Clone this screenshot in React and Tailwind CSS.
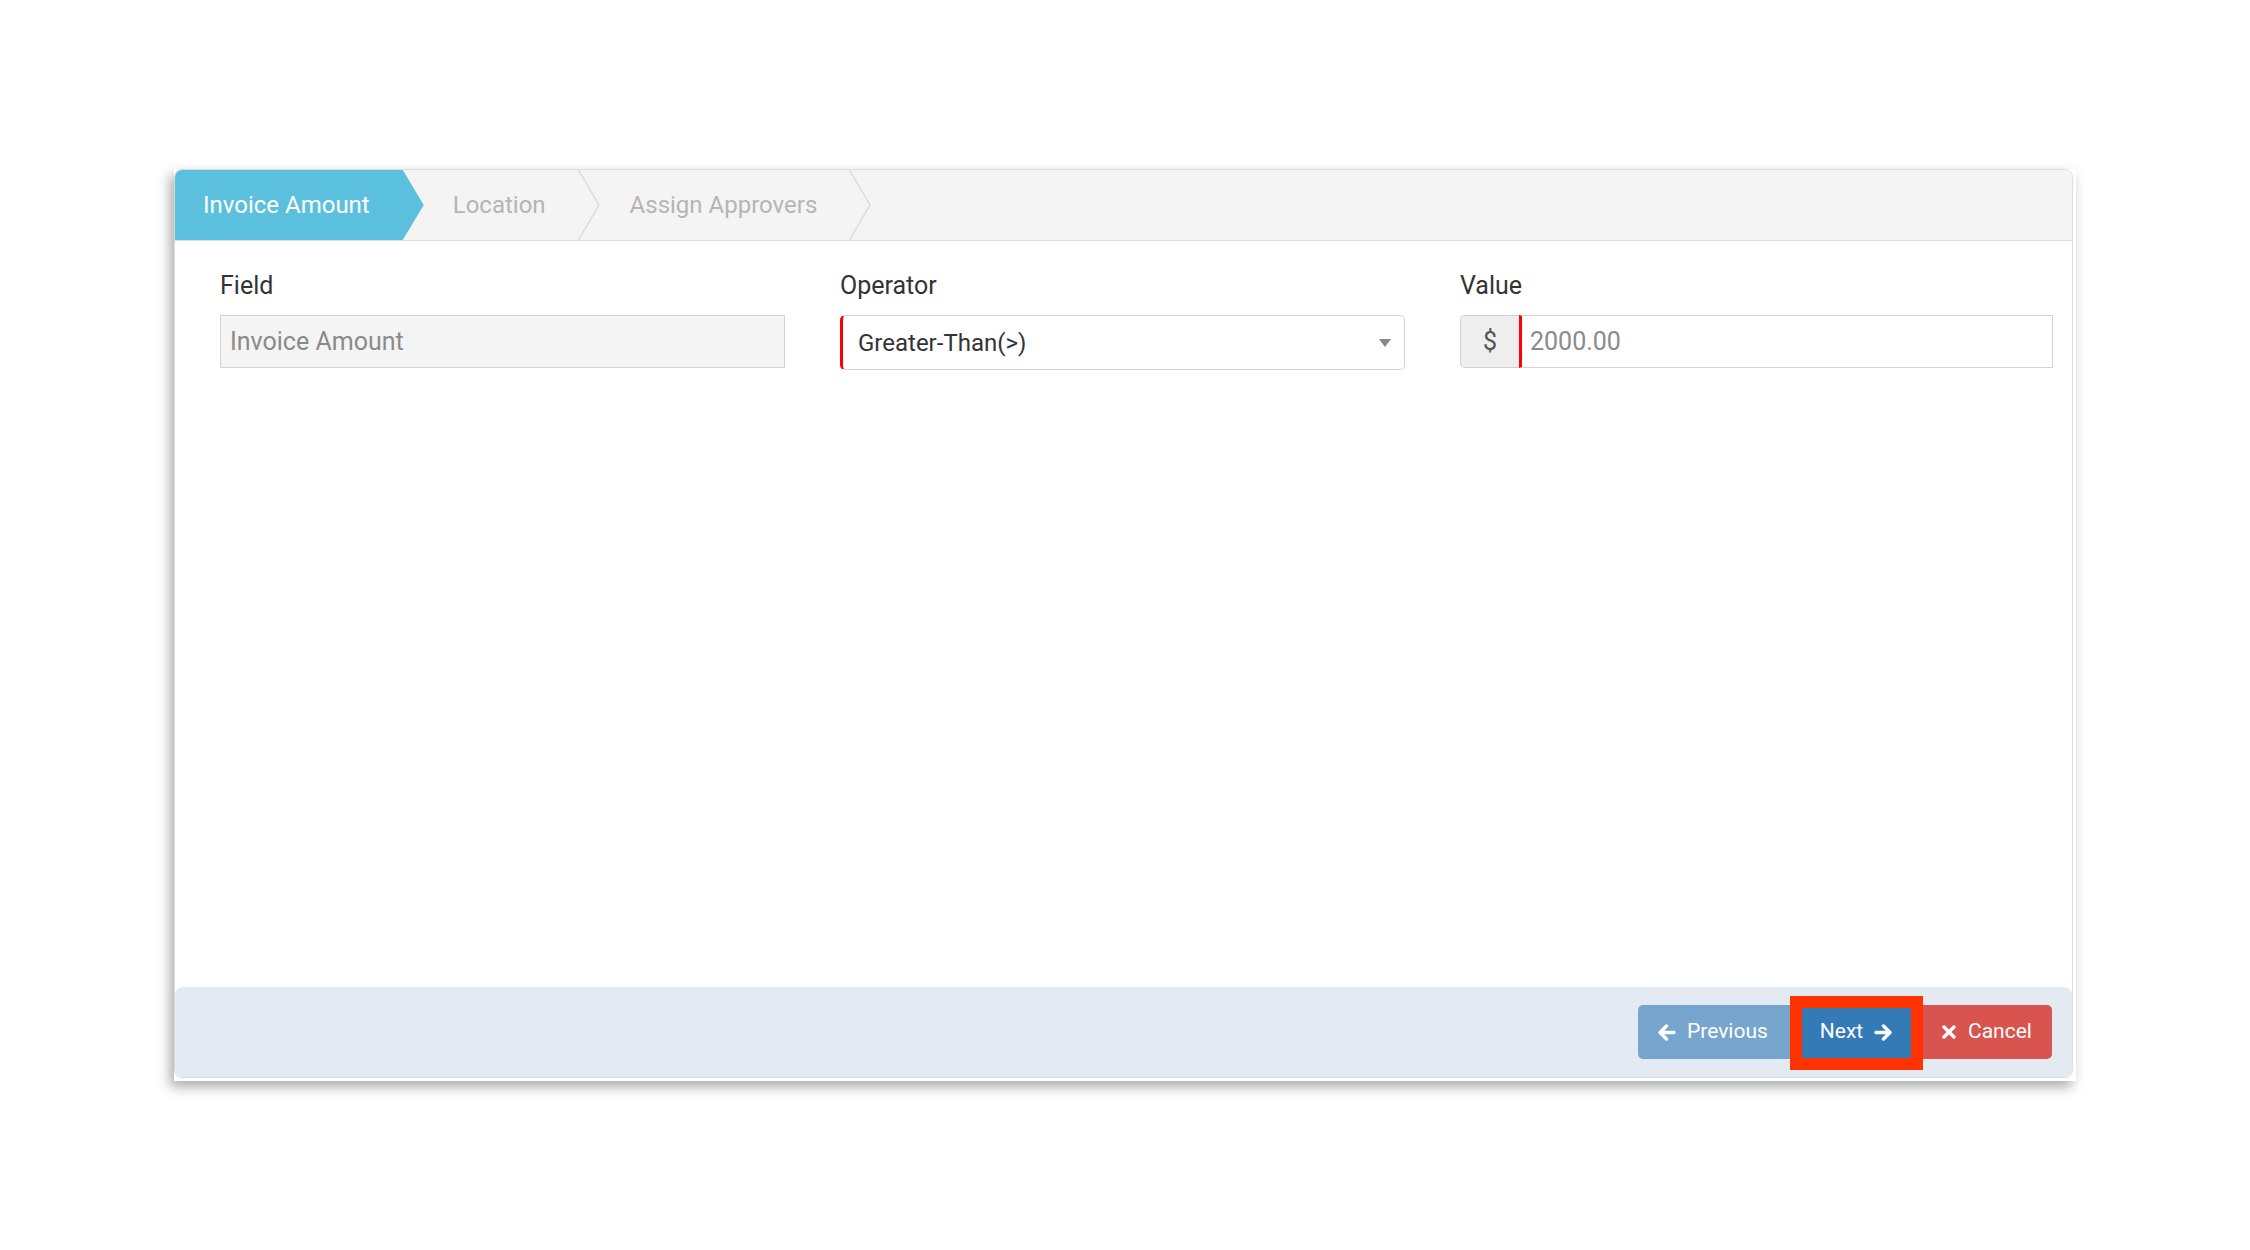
import React from "react";

function ArrowLeftIcon() {
  return (
    <svg width="19" height="17" viewBox="0 0 19 17" fill="none">
      <path d="M17 8.5H3M9.5 2L3 8.5L9.5 15" stroke="white" strokeWidth="3.4" strokeLinecap="round" strokeLinejoin="round" />
    </svg>
  );
}

function ArrowRightIcon() {
  return (
    <svg width="19" height="17" viewBox="0 0 19 17" fill="none">
      <path d="M2 8.5H16M9.5 2L16 8.5L9.5 15" stroke="white" strokeWidth="3.4" strokeLinecap="round" strokeLinejoin="round" />
    </svg>
  );
}

function XIcon() {
  return (
    <svg width="14" height="14" viewBox="0 0 14 14" fill="none">
      <path d="M2 2L12 12M12 2L2 12" stroke="white" strokeWidth="3.4" strokeLinecap="round" />
    </svg>
  );
}

function Chevron() {
  return (
    <svg className="absolute right-0 top-0 h-full w-[22px]" viewBox="0 0 22 70" preserveAspectRatio="none" fill="none">
      <polyline points="0.5,0 21,35 0.5,70" stroke="#d9d9d9" strokeWidth="1.3" />
    </svg>
  );
}

export default function App() {
  return (
    <div className="w-[2250px] h-[1250px] bg-white pt-[169px] pl-[174px] font-['Roboto'] overflow-hidden">
      <div className="w-[1902px] h-[912px] bg-white pr-[3px] pb-[3px] shadow-[-4px_6px_12px_rgba(0,0,0,0.33)]">
        <div className="w-[1899px] h-[909px] flex flex-col rounded-[8px] border border-[#dcdcdc] overflow-hidden bg-white">
          {/* Tabs */}
          <div className="h-[71px] shrink-0 bg-[#f4f4f4] border-b border-[#dddddd] flex items-stretch text-[24px]">
            <div className="bg-[#5bc0de] text-white pl-[28px] pr-[54px] flex items-center [clip-path:polygon(0_0,calc(100%_-_21px)_0,100%_50%,calc(100%_-_21px)_100%,0_100%)]">
              Invoice Amount
            </div>
            <div className="relative pl-[29px] pr-[54px] flex items-center text-[#b5b5b5]">
              Location
              <Chevron />
            </div>
            <div className="relative pl-[30px] pr-[54px] flex items-center text-[#b5b5b5]">
              Assign Approvers
              <Chevron />
            </div>
          </div>

          {/* Body */}
          <div className="flex-1 pt-[28px] pl-[45px] pr-[18px]">
            <div className="grid grid-cols-[565px_565px_593px] gap-x-[55px]">
              <div>
                <div className="text-[25px] leading-[34px] text-[#333333] mb-[12px]">Field</div>
                <div className="h-[53px] border border-[#d4d4d4] bg-[#f4f4f4] px-[9px] flex items-center text-[25px] text-[#8a8a8a]">
                  Invoice Amount
                </div>
              </div>
              <div>
                <div className="text-[25px] leading-[34px] text-[#333333] mb-[12px]">Operator</div>
                <div className="h-[55px] border border-[#d4d4d4] border-l-[3px] border-l-[#ff0000] rounded-[5px] flex items-center justify-between pl-[15px] pr-[13px] text-[24px] text-[#333333]">
                  <span>Greater-Than(&gt;)</span>
                  <svg width="12" height="8" viewBox="0 0 12 8">
                    <polygon points="0,0 12,0 6,8" fill="#888888" />
                  </svg>
                </div>
              </div>
              <div>
                <div className="text-[25px] leading-[34px] text-[#333333] mb-[12px]">Value</div>
                <div className="h-[53px] flex text-[25px]">
                  <div className="w-[59px] shrink-0 bg-[#eeeeee] border border-r-0 border-[#d0d0d0] rounded-l-[5px] flex items-center justify-center text-[#555555]">
                    $
                  </div>
                  <div className="flex-1 border border-[#d4d4d4] border-l-[3px] border-l-[#ff0000] pl-[8px] flex items-center text-[#8a8a8a]">
                    2000.00
                  </div>
                </div>
              </div>
            </div>
          </div>

          {/* Footer */}
          <div className="h-[90px] shrink-0 bg-[#e4eaf2] rounded-[8px] flex justify-end items-start pt-[18px] pr-[20px]">
            <div className="flex text-[21px] text-white">
              <div className="h-[54px] w-[152px] bg-[#76a5ce] rounded-l-[5px] flex items-center pl-[19px] gap-[11px]">
                <ArrowLeftIcon />
                <span>Previous</span>
              </div>
              <div className="relative h-[54px] w-[133px] bg-[#337ab7] flex items-center justify-center gap-[11px]">
                <span>Next</span>
                <ArrowRightIcon />
                <div className="absolute left-0 right-0 top-[-9px] bottom-[-11px] border-[12px] border-[#ff3300]"></div>
              </div>
              <div className="h-[54px] w-[129px] bg-[#d9534f] rounded-r-[5px] flex items-center pl-[19px] gap-[12px]">
                <XIcon />
                <span>Cancel</span>
              </div>
            </div>
          </div>
        </div>
      </div>
    </div>
  );
}
